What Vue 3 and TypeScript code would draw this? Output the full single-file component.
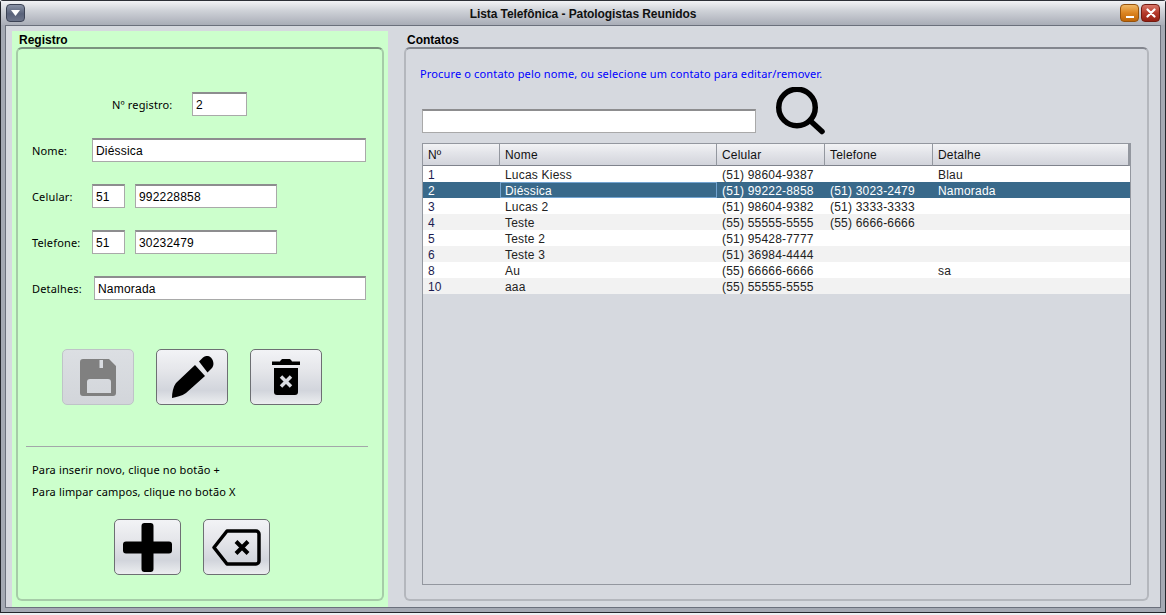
<script setup lang="ts">
interface Contact {
  id: number
  nome: string
  celular: string
  telefone: string
  detalhe: string
}

const contacts: Contact[] = [
  { id: 1, nome: 'Lucas Kiess', celular: '(51) 98604-9387', telefone: '', detalhe: 'Blau' },
  { id: 2, nome: 'Diéssica', celular: '(51) 99222-8858', telefone: '(51) 3023-2479', detalhe: 'Namorada' },
  { id: 3, nome: 'Lucas 2', celular: '(51) 98604-9382', telefone: '(51) 3333-3333', detalhe: '' },
  { id: 4, nome: 'Teste', celular: '(55) 55555-5555', telefone: '(55) 6666-6666', detalhe: '' },
  { id: 5, nome: 'Teste 2', celular: '(51) 95428-7777', telefone: '', detalhe: '' },
  { id: 6, nome: 'Teste 3', celular: '(51) 36984-4444', telefone: '', detalhe: '' },
  { id: 8, nome: 'Au', celular: '(55) 66666-6666', telefone: '', detalhe: 'sa' },
  { id: 10, nome: 'aaa', celular: '(55) 55555-5555', telefone: '', detalhe: '' },
]

const selectedId = 2
</script>

<template>
  <div class="window">
    <header class="titlebar">
      <button class="win-btn menu-btn">
        <svg width="9" height="6" viewBox="0 0 9 6"><path d="M0 0h9L4.500 6z" fill="#fff" /></svg>
      </button>
      <span class="title">Lista Telefônica - Patologistas Reunidos</span>
      <button class="win-btn min-btn"><i class="min-mark"></i></button>
      <button class="win-btn close-btn">
        <svg width="10" height="10" viewBox="0 0 10 10"><path d="M1.500 1.500l7 7M8.500 1.500l-7 7" stroke="#fff" stroke-width="2.200" stroke-linecap="round" /></svg>
      </button>
    </header>

    <main class="content">
      <section class="registro">
        <h2 class="group-title">Registro</h2>
        <div class="group-box form-box">
          <div class="row row-registro">
            <label>Nº registro:</label>
            <input class="field" value="2" />
          </div>
          <div class="row">
            <label>Nome:</label>
            <input class="field grow" value="Diéssica" />
          </div>
          <div class="row">
            <label>Celular:</label>
            <input class="field ddd" value="51" />
            <input class="field phone" value="992228858" />
          </div>
          <div class="row">
            <label>Telefone:</label>
            <input class="field ddd" value="51" />
            <input class="field phone" value="30232479" />
          </div>
          <div class="row row-detalhes">
            <label>Detalhes:</label>
            <input class="field grow" value="Namorada" />
          </div>

          <div class="actions">
            <button class="tool-btn" disabled>
              <svg width="36" height="37" viewBox="0 0 36 37">
                <path fill="#808080" fill-rule="evenodd" d="M3 0h26l7 7v27a3 3 0 0 1-3 3H3a3 3 0 0 1-3-3V3a3 3 0 0 1 3-3zM19.500 1v8h3.500V1zM10 20a3 3 0 0 0-3 3v11h24V23a3 3 0 0 0-3-3z" />
              </svg>
            </button>
            <button class="tool-btn">
              <svg width="43" height="43" viewBox="0 0 43 43">
                <path d="M28 5.500l4-4c3-2.500 7-2 9 1.500 2 3 2 7-.5 9.500l-4 4z" />
                <path d="M24 9l10 11-19 17c-4 3-10 4-14 5 0-5 1-11 4-15z" />
              </svg>
            </button>
            <button class="tool-btn">
              <svg width="28" height="36" viewBox="0 0 28 36">
                <path d="M0 2.500h8C9 .5 10 0 11 0h6c1 0 2 .5 3 2.500h8V6H0z" />
                <path d="M2 9h24v24a3 3 0 0 1-3 3H5a3 3 0 0 1-3-3z" />
                <path d="M9 17.500l10 10M19 17.500l-10 10" stroke="#dadce2" stroke-width="3.500" fill="none" />
              </svg>
            </button>
          </div>

          <hr class="divider" />
          <p class="hint hint-first">Para inserir novo, clique no botão +</p>
          <p class="hint">Para limpar campos, clique no botão X</p>

          <div class="actions actions-new">
            <button class="tool-btn small">
              <svg width="49" height="49" viewBox="0 0 49 49">
                <path d="M18.500 3a3 3 0 0 1 3-3h6a3 3 0 0 1 3 3v15.500H46a3 3 0 0 1 3 3v6a3 3 0 0 1-3 3H30.500V46a3 3 0 0 1-3 3h-6a3 3 0 0 1-3-3V30.500H3a3 3 0 0 1-3-3v-6a3 3 0 0 1 3-3h15.500z" />
              </svg>
            </button>
            <button class="tool-btn small">
              <svg width="49" height="37" viewBox="0 0 49 37" fill="none" stroke="#000">
                <path stroke-width="3.500" stroke-linejoin="round" d="M15 2h29a3 3 0 0 1 3 3v27a3 3 0 0 1-3 3H15L2 18.500z" />
                <path stroke-width="4" d="M24 12.500l12 12M36 12.500l-12 12" />
              </svg>
            </button>
          </div>
        </div>
      </section>

      <section class="contatos">
        <h2 class="group-title">Contatos</h2>
        <div class="group-box list-box">
          <p class="help">Procure o contato pelo nome, ou selecione um contato para editar/remover.</p>
          <div class="search-row">
            <input class="field search" />
            <svg class="search-icon" width="49" height="48" viewBox="0 0 49 48" fill="none" stroke="#000" stroke-linecap="round">
              <circle cx="21" cy="20.500" r="18.250" stroke-width="5.500" />
              <path stroke-width="5.500" d="M34 33.500l12 11" />
            </svg>
          </div>
          <div class="table-wrap">
            <table class="grid">
              <colgroup>
                <col class="col-id" />
                <col class="col-nome" />
                <col class="col-fone" />
                <col class="col-fone" />
                <col />
              </colgroup>
              <thead>
                <tr>
                  <th>Nº</th>
                  <th>Nome</th>
                  <th>Celular</th>
                  <th>Telefone</th>
                  <th>Detalhe</th>
                </tr>
              </thead>
              <tbody>
                <tr v-for="c in contacts" :key="c.id" :class="{ selected: c.id === selectedId }">
                  <td>{{ c.id }}</td>
                  <td class="nome">{{ c.nome }}</td>
                  <td>{{ c.celular }}</td>
                  <td>{{ c.telefone }}</td>
                  <td>{{ c.detalhe }}</td>
                </tr>
              </tbody>
            </table>
          </div>
        </div>
      </section>
    </main>
  </div>
</template>

<style>
html,
body {
  background: #eef0f3;
}
</style>

<style scoped>
.window {
  box-sizing: border-box;
  width: 1166px;
  height: 613px;
  display: flex;
  flex-direction: column;
  background: #a4a9b3;
  border: 1px solid #23262c;
  border-top-color: #2c2f36;
  border-radius: 3px 3px 0 0;
  font-family: "Liberation Sans", Arial, sans-serif;
  color: #000;
}

.titlebar {
  flex: none;
  height: 24px;
  padding: 3px 5px 0;
  box-sizing: border-box;
  display: flex;
  align-items: flex-start;
  background: linear-gradient(#f2f3f5, #cfd2d8 40%, #a9adb7);
}

.title {
  flex: 1;
  text-align: center;
  font-size: 12px;
  font-weight: bold;
  letter-spacing: -0.08px;
  line-height: 18px;
  padding: 1px 0 0 21px;
  color: #111;
}

.win-btn {
  width: 19px;
  height: 18px;
  padding: 0;
  border-radius: 4px;
  display: flex;
  align-items: center;
  justify-content: center;
}

.menu-btn {
  background: linear-gradient(#8a93a6, #59627a 55%, #6c7489);
  border: 1px solid #3c4355;
}

.min-btn {
  margin-right: 2px;
  background: linear-gradient(#f0b866, #dc8420 50%, #bf6608);
  border: 1px solid #96520c;
}

.min-mark {
  display: block;
  width: 8px;
  height: 2px;
  margin-top: 7px;
  background: #fff;
}

.close-btn {
  background: linear-gradient(#d9776a, #b53a2b 50%, #951f12);
  border: 1px solid #741a10;
}

.content {
  flex: 1;
  min-height: 0;
  margin: 0 4px 4px;
  padding: 5px 11px 0 6px;
  display: flex;
  background: #d6d9df;
  border: 1px solid #6b707c;
}

.registro {
  width: 376px;
  flex: none;
  padding: 0 4px 6px;
  box-sizing: border-box;
  display: flex;
  flex-direction: column;
  background: #ccffcc;
}

.contatos {
  flex: 1;
  min-width: 0;
  margin-left: 16px;
  padding-bottom: 6px;
  display: flex;
  flex-direction: column;
}

.group-title {
  flex: none;
  margin: 0 0 0 3px;
  height: 16px;
  font-size: 12px;
  line-height: 19px;
  font-weight: bold;
}

.group-box {
  flex: 1;
  min-height: 0;
  box-sizing: border-box;
  border-radius: 6px;
  border: 2px solid #b4b7bd;
  border-top-color: #83868e;
}

.form-box {
  padding: 43px 0 0 14px;
  border-color: #a6cca8;
  border-top-color: #7b937f;
  font-family: "Noto Sans", "Open Sans", sans-serif;
  font-size: 11px;
  letter-spacing: 0.15px;
}

.row {
  display: flex;
  align-items: center;
  height: 24px;
  margin-bottom: 22px;
}

.row label {
  width: 60px;
  flex: none;
}

.row-registro label {
  width: 80px;
  margin-left: 80px;
}

.row-detalhes label {
  width: 62px;
}

.field {
  box-sizing: border-box;
  height: 24px;
  padding: 0 3px;
  border: 1px solid #a9a9a9;
  border-top: 2px solid #8d8d8f;
  background: #fff;
  color: #000;
  font-family: "Liberation Sans", Arial, sans-serif;
  font-size: 12px;
  letter-spacing: 0.2px;
  outline: none;
}

.row-registro .field {
  width: 55px;
}

.grow {
  width: 274px;
}

.row-detalhes .grow {
  width: 272px;
}

.ddd {
  width: 33px;
  margin-right: 10px;
}

.phone {
  width: 142px;
}

.actions {
  display: flex;
  gap: 22px;
  margin: 49px 0 0 30px;
}

.actions-new {
  margin: 16px 0 0 82px;
}

.tool-btn {
  width: 72px;
  height: 56px;
  padding: 0;
  display: flex;
  align-items: center;
  justify-content: center;
  border: 1px solid #6d6f73;
  border-radius: 5px;
  background: linear-gradient(#f2f3f6, #e6e7eb 35%, #d2d5dc 75%, #eceef0);
}

.tool-btn:disabled {
  border-color: #bfc3c8;
  background: linear-gradient(#dcdfe3, #d2d5da);
}

.tool-btn.small {
  width: 67px;
}

.divider {
  height: 0;
  margin: 41px 14px 0 -6px;
  border: 0;
  border-top: 1px solid #a3a7a9;
}

.hint {
  margin: 0;
  height: 22px;
  line-height: 22px;
}

.hint-first {
  margin-top: 12px;
}

.list-box {
  padding: 17px 16px 14px 16px;
  display: flex;
  flex-direction: column;
}

.help {
  flex: none;
  margin: 0 0 0 -2px;
  height: 16px;
  line-height: 16px;
  font-family: "Noto Sans", "Open Sans", sans-serif;
  font-size: 11px;
  letter-spacing: 0.15px;
  color: #0000ff;
}

.search-row {
  flex: none;
  height: 61px;
  display: flex;
  align-items: flex-start;
}

.search {
  width: 334px;
  margin-top: 27px;
}

.search-icon {
  margin: 5px 0 0 20px;
}

.table-wrap {
  flex: 1;
  min-height: 0;
  border: 1px solid #93979f;
}

.grid {
  width: 100%;
  border-collapse: separate;
  border-spacing: 0;
  table-layout: fixed;
  font-size: 12px;
  letter-spacing: 0.2px;
}

.col-id {
  width: 77px;
}

.col-nome {
  width: 217px;
}

.col-fone {
  width: 108px;
}

.grid th {
  height: 22px;
  padding: 0 0 0 5px;
  box-sizing: border-box;
  font-weight: normal;
  text-align: left;
  color: #111;
  background: linear-gradient(#f2f3f5, #e4e5ea 40%, #d2d4db);
  border-right: 1px solid #93979f;
  border-bottom: 1px solid #7f838c;
}

.grid th:last-child {
  border-right: 2px solid #93979f;
}

.grid td {
  height: 14px;
  padding: 2px 0 0 5px;
  line-height: 14px;
  white-space: nowrap;
  overflow: hidden;
  color: #222;
  background: #fff;
}

.grid tbody tr:nth-child(even) td {
  background: #f2f2f2;
}

.grid td:first-child {
  color: #1c1c50;
}

.grid tbody tr.selected td {
  background: #39698a;
  color: #fff;
}

.grid tbody tr.selected td.nome {
  box-shadow: inset 0 0 0 1px #73a4d1;
}
</style>
